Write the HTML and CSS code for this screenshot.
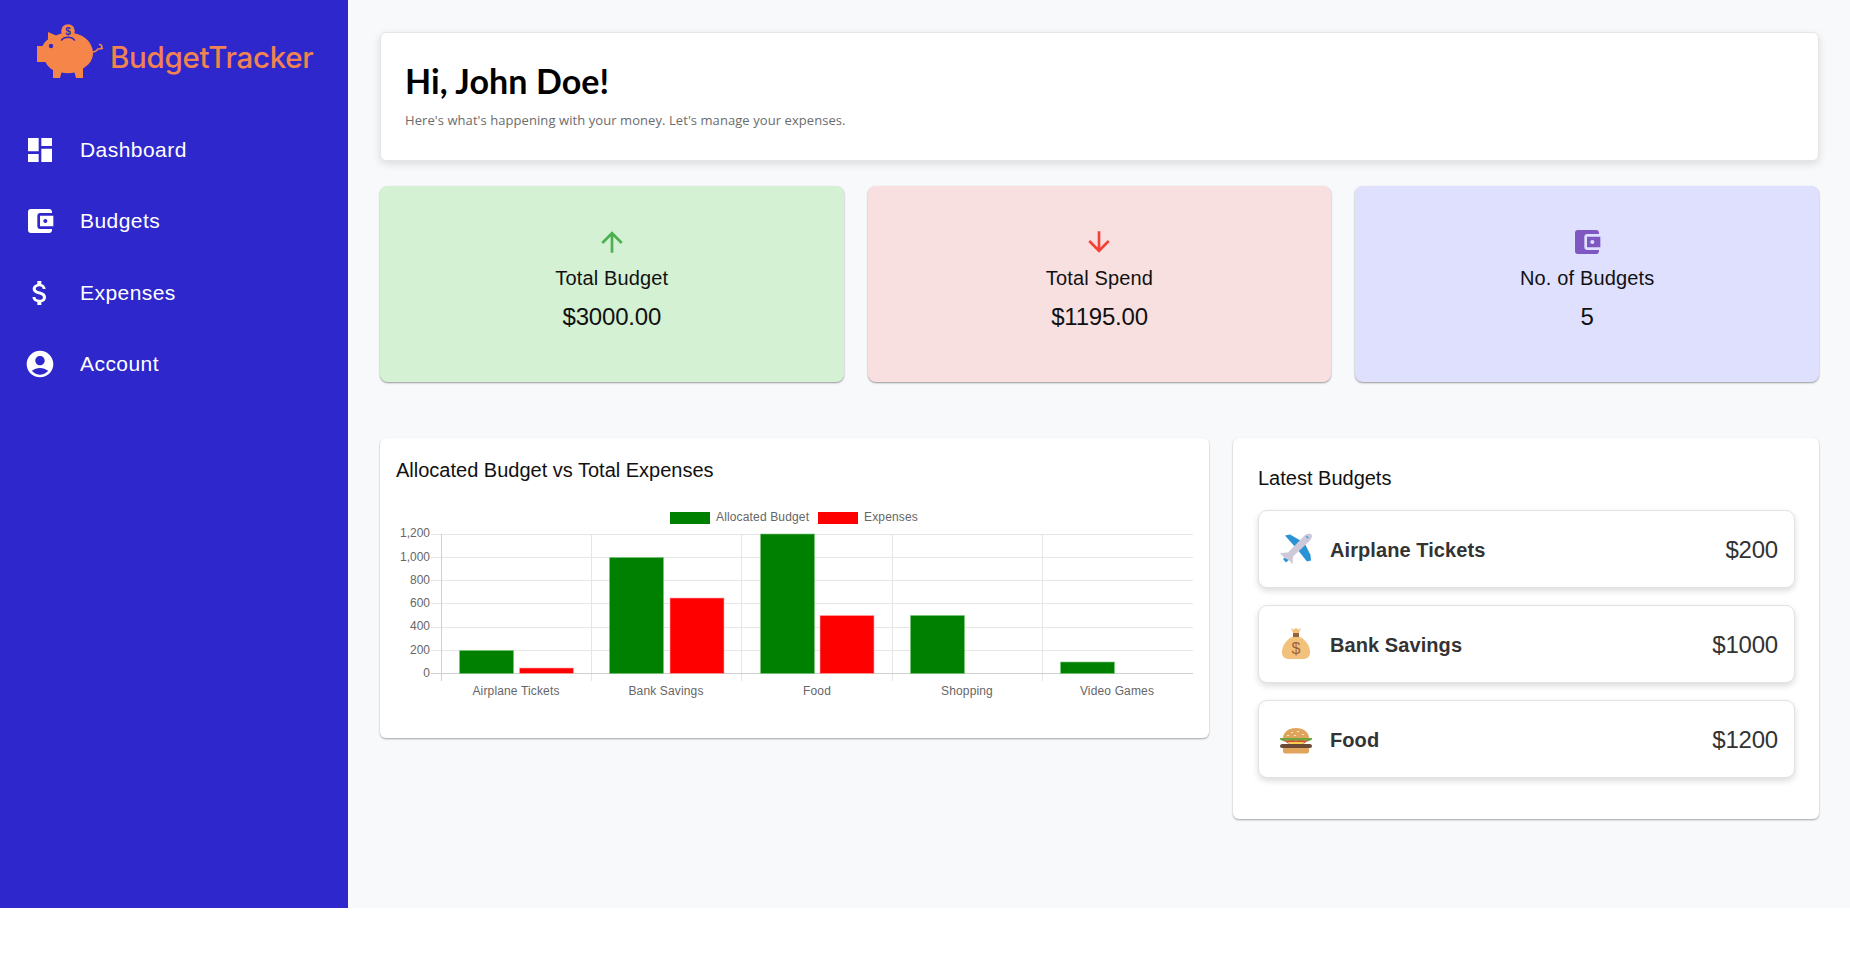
FILE: index.html
```html
<!DOCTYPE html>
<html lang="en">
<head>
<meta charset="utf-8">
<title>BudgetTracker</title>
<link rel="stylesheet" href="styles.css">
</head>
<body>
<div class="shell">
  <aside class="side">
    <div class="brand">
      <svg class="pig" viewBox="37 22 68 58" aria-hidden="true">
        <path class="orange" d="M48 32l8 3.500c3-1.400 6-2.300 9-2.500 2 2.600 5 2.600 7 0 11 1 21 9 21 20 0 7-4 12-10 15.500V78h-7l-1.500-5.500c-4 1-9 1-13 0L60 78h-7v-8c-3.500-2-6-4.500-7.500-8H37V46h5.500c1.300-3 3-4.800 5.500-6.500z"/>
        <circle class="orange" cx="68" cy="31" r="6.800"/>
        <text class="coin" x="68" y="34.500" text-anchor="middle">$</text>
        <path class="slot" d="M61 40.500l3-2.500c3-1.200 5-1.200 8 0l3 2.500"/>
        <circle class="eye" cx="51" cy="46" r="2.200"/>
        <path class="tail" d="M92 52c3 0 5-1 6-3.500M99 44.500a2.300 2.300 0 1 1-1 4c1 .8 3 .5 5-.500"/>
      </svg>
      <span class="brand-name">BudgetTracker</span>
    </div>
    <nav class="nav">
      <a class="nav-item">
        <svg class="icon" viewBox="0 0 24 24"><path d="M3 13h8V3H3v10zm0 8h8v-6H3v6zm10 0h8V11h-8v10zm0-18v6h8V3h-8z"/></svg>
        <span>Dashboard</span>
      </a>
      <a class="nav-item">
        <svg class="icon" viewBox="0 0 24 24"><path d="M21 18v1c0 1.100-.9 2-2 2H5c-1.110 0-2-.9-2-2V5c0-1.100.89-2 2-2h14c1.100 0 2 .9 2 2v1h-9c-1.110 0-2 .9-2 2v8c0 1.100.89 2 2 2h9zm-9-2h10V8H12v8zm4-2.500c-.83 0-1.500-.67-1.500-1.500s.67-1.500 1.500-1.500 1.500.67 1.500 1.500-.67 1.500-1.500 1.500z"/></svg>
        <span>Budgets</span>
      </a>
      <a class="nav-item">
        <svg class="icon" viewBox="0 0 24 24"><path d="M11.800 10.900c-2.270-.59-3-1.200-3-2.150 0-1.090 1.010-1.850 2.700-1.850 1.780 0 2.440.85 2.500 2.100h2.210c-.07-1.720-1.120-3.300-3.210-3.810V3h-3v2.160c-1.940.42-3.500 1.680-3.500 3.610 0 2.310 1.910 3.460 4.700 4.130 2.500.6 3 1.480 3 2.410 0 .69-.49 1.790-2.700 1.790-2.060 0-2.870-.92-2.980-2.100h-2.200c.12 2.190 1.760 3.420 3.680 3.830V21h3v-2.150c1.950-.37 3.500-1.500 3.500-3.550 0-2.840-2.430-3.810-4.700-4.400z"/></svg>
        <span>Expenses</span>
      </a>
      <a class="nav-item">
        <svg class="icon" viewBox="0 0 24 24"><path d="M12 2C6.480 2 2 6.480 2 12s4.480 10 10 10 10-4.480 10-10S17.520 2 12 2zm0 4c1.930 0 3.500 1.570 3.500 3.500S13.930 13 12 13s-3.500-1.570-3.500-3.500S10.070 6 12 6zm0 14c-2.030 0-4.430-.82-6.140-2.880C7.550 15.800 9.680 15 12 15s4.450.8 6.140 2.120C16.430 19.180 14.030 20 12 20z"/></svg>
        <span>Account</span>
      </a>
    </nav>
  </aside>

  <main class="main">
    <section class="card greeting">
      <h1>Hi, John Doe!</h1>
      <p>Here's what's happening with your money. Let's manage your expenses.</p>
    </section>

    <section class="stats">
      <div class="stat stat-green">
        <svg class="icon icon-green" viewBox="0 0 24 24"><path d="M4 12l1.410 1.410L11 7.830V20h2V7.830l5.580 5.590L20 12l-8-8-8 8z"/></svg>
        <div class="stat-label">Total Budget</div>
        <div class="stat-value">$3000.00</div>
      </div>
      <div class="stat stat-red">
        <svg class="icon icon-red" viewBox="0 0 24 24"><path d="M20 12l-1.410-1.410L13 16.170V4h-2v12.170l-5.580-5.590L4 12l8 8 8-8z"/></svg>
        <div class="stat-label">Total Spend</div>
        <div class="stat-value">$1195.00</div>
      </div>
      <div class="stat stat-blue">
        <svg class="icon icon-purple" viewBox="0 0 24 24"><path d="M21 18v1c0 1.100-.9 2-2 2H5c-1.110 0-2-.9-2-2V5c0-1.100.89-2 2-2h14c1.100 0 2 .9 2 2v1h-9c-1.110 0-2 .9-2 2v8c0 1.100.89 2 2 2h9zm-9-2h10V8H12v8zm4-2.500c-.83 0-1.500-.67-1.500-1.500s.67-1.500 1.500-1.500 1.500.67 1.500 1.500-.67 1.500-1.500 1.500z"/></svg>
        <div class="stat-label">No. of Budgets</div>
        <div class="stat-value">5</div>
      </div>
    </section>

    <section class="lower">
      <div class="panel chart-panel">
        <h2 class="panel-title">Allocated Budget vs Total Expenses</h2>
        <svg class="chart" viewBox="380 500 829 220" aria-label="Bar chart">
          <g class="grid">
            <path d="M431 534.500H1193M431 557.500H1193M431 580.500H1193M431 603.500H1193M431 627.500H1193M431 650.500H1193"/>
            <path d="M591.500 534V681M741.500 534V681M892.500 534V681M1042.500 534V681"/>
          </g>
          <path class="axis" d="M431 673.500H1193M441.500 534V681"/>
          <g class="bar-green">
            <rect x="459.500" y="650.500" width="54" height="23"/>
            <rect x="609.500" y="557.500" width="54" height="116"/>
            <rect x="760.500" y="534" width="54" height="139.500"/>
            <rect x="910.500" y="615.500" width="54" height="58"/>
            <rect x="1060.500" y="662" width="54" height="11.500"/>
          </g>
          <g class="bar-red">
            <rect x="519.500" y="668" width="54" height="5.500"/>
            <rect x="670" y="598" width="54" height="75.500"/>
            <rect x="820" y="615.500" width="54" height="58"/>
          </g>
          <rect class="legend-green" x="670" y="512" width="40" height="12"/>
          <text class="tick tick-wide" x="716" y="521">Allocated Budget</text>
          <rect class="legend-red" x="818" y="512" width="40" height="12"/>
          <text class="tick tick-wide" x="864" y="521">Expenses</text>
          <g class="tick tick-y">
            <text x="430" y="537">1,200</text>
            <text x="430" y="561">1,000</text>
            <text x="430" y="584">800</text>
            <text x="430" y="607">600</text>
            <text x="430" y="630">400</text>
            <text x="430" y="654">200</text>
            <text x="430" y="677">0</text>
          </g>
          <g class="tick tick-x tick-wide">
            <text x="516" y="695">Airplane Tickets</text>
            <text x="666" y="695">Bank Savings</text>
            <text x="817" y="695">Food</text>
            <text x="967" y="695">Shopping</text>
            <text x="1117" y="695">Video Games</text>
          </g>
        </svg>
      </div>

      <div class="panel latest-panel">
        <h2 class="panel-title">Latest Budgets</h2>
        <div class="budget-list">
          <div class="budget">
            <svg class="emoji" viewBox="0 0 32 32">
              <path fill="#2a93d5" d="M5 2.500L10 1.500L23 9L16 15z"/>
              <path fill="#2a93d5" d="M17 16L24 9L30.500 22L31 27.500L27 28.500z"/>
              <path fill="#2a93d5" d="M3 26L8 22L11 25L6 29.500z"/>
              <path fill="#cdc9d9" d="M25 2C28 0 31 .5 31.800 2C32.500 4 31 6.500 29 8.500L13 23.500L12.500 31.500L9.500 27.500L4.500 25L0 20L8 19.500z"/>
              <path fill="#5aa9de" d="M27 2.500l2 2-1.500 1.200-2-2z"/>
            </svg>
            <span class="budget-name">Airplane Tickets</span>
            <span class="budget-amount">$200</span>
          </div>
          <div class="budget">
            <svg class="emoji" viewBox="0 0 32 32">
              <path fill="#f2c27c" d="M11 0l2.500 1.500L16 0l2.500 1.500L21 0l-2 5h-6z"/>
              <path fill="#96623d" d="M13 5h6v4h-6z"/>
              <path fill="#f2c27c" d="M12 9h8c6 3 10 9 10 15 0 5-3 7-7 7H9c-4 0-7-2-7-7 0-6 4-12 10-15z"/>
              <text class="emoji-dollar" x="16" y="26" text-anchor="middle">$</text>
            </svg>
            <span class="budget-name">Bank Savings</span>
            <span class="budget-amount">$1000</span>
          </div>
          <div class="budget">
            <svg class="emoji" viewBox="0 0 32 32">
              <path fill="#e0a45c" d="M3 15C3 9 9 5 16 5s13 4 13 10z"/>
              <path fill="#fbe8c4" d="M11 9h2v1h-2zM17 8h2v1h-2zM22 11h2v1h-2zM7 12h2v1H7zM14 12h2v1h-2z"/>
              <path fill="#6ea53c" d="M0 15h32v1.500l-4 2-4-1-4 2-4-2-4 2-4-2-4 1-4-2z"/>
              <path fill="#d9503a" d="M4 17.500h24l-4 3H8z"/>
              <path fill="#f5d04f" d="M8 19h16l-2 3H10z"/>
              <path fill="#6d4a36" d="M2 21h28c1 0 2 1 2 2s-1 2-2 2H2c-1 0-2-1-2-2s1-2 2-2z"/>
              <path fill="#e0a45c" d="M3 25h26v3.500c0 1-1 2-2 2H5c-1 0-2-1-2-2z"/>
            </svg>
            <span class="budget-name">Food</span>
            <span class="budget-amount">$1200</span>
          </div>
        </div>
      </div>
    </section>
  </main>
</div>
</body>
</html>
```

FILE: styles.css
```css
* { box-sizing: border-box; }
html, body { margin: 0; padding: 0; background: #fff; }
body { font-family: "Liberation Sans", Arial, sans-serif; color: #000; }
.shell { display: flex; height: 908px; overflow: hidden; }

.side { width: 348px; flex: none; background: #2e27cb; color: #fff; }
.brand { display: flex; align-items: center; gap: 5px; padding: 22px 0 0 37px; height: 80px; }
.pig { width: 68px; height: 58px; flex: none; }
.orange { fill: #f58549; }
.eye { fill: #2e27cb; }
.slot { fill: none; stroke: #2e27cb; stroke-width: 1.500; }
.tail { fill: none; stroke: #f58549; stroke-width: 1.600; }
.coin { fill: #2e27cb; font-size: 10px; font-weight: 700; font-family: "Liberation Sans", sans-serif; }
.brand-name { color: #f0834f; font-family: Inter, sans-serif; font-weight: 500; font-size: 29.500px; letter-spacing: -0.3px; line-height: 1; margin-top: 13px; }

.nav { margin-top: 34px; display: flex; flex-direction: column; }
.nav-item { display: flex; align-items: center; gap: 24px; height: 71.500px; padding-left: 24px; font-size: 21px; letter-spacing: .45px; }
.icon { width: 32px; height: 32px; flex: none; fill: currentColor; display: block; }

.main { flex: 1; min-width: 0; background: #f8f9fa; padding: 32px 31px 0 32px; }
.card { background: #fff; border-radius: 6px; border: 1px solid #e5e5e5; box-shadow: 0 3px 8px rgba(0,0,0,.12); }
.greeting { height: 129px; padding: 28px 24px 0; margin-bottom: 25px; }
.greeting h1 { margin: 0; font-family: Lato, sans-serif; font-weight: 700; font-size: 34px; letter-spacing: .1px; line-height: 40px; }
.greeting p { margin: 10px 0 0; font-family: "Open Sans", sans-serif; font-size: 13px; letter-spacing: .07px; line-height: 18px; color: #6c6c6c; }

.stats { display: grid; grid-template-columns: repeat(3, 1fr); gap: 24px; margin-bottom: 56px; }
.stat { height: 196px; border-radius: 8px; display: flex; flex-direction: column; align-items: center; padding-top: 40px; box-shadow: 0 1px 2px rgba(0,0,0,.4); }
.stat-green { background: #d4f1d4; }
.stat-red { background: #f9e0e0; }
.stat-blue { background: #dfdffe; }
.icon-green { color: #4caf50; }
.icon-red { color: #f44336; }
.icon-purple { color: #7e57c2; }
.stat-label { font-size: 20px; line-height: 28px; margin-top: 6px; letter-spacing: .15px; color: #111; }
.stat-value { font-size: 24px; line-height: 32px; margin-top: 9px; letter-spacing: -.2px; color: #111; }

.lower { display: grid; grid-template-columns: 829px 1fr; gap: 24px; align-items: start; }
.panel { background: #fff; border-radius: 6px; box-shadow: 0 1px 2px rgba(0,0,0,.35); }
.panel-title { margin: 0; font-size: 20px; font-weight: 400; line-height: 32px; color: #111; }
.chart-panel { height: 300px; padding-top: 16px; }
.chart-panel .panel-title { padding-left: 16px; }
.chart { display: block; width: 829px; height: 220px; margin-top: 14px; }
.grid path { fill: none; stroke: #e6e6e6; stroke-width: 1; }
.axis { fill: none; stroke: #d0d0d0; stroke-width: 1; }
.bar-green rect { fill: #008000; stroke: rgba(120,200,120,.6); stroke-width: 1; }
.bar-red rect { fill: #f00; stroke: rgba(255,170,170,.6); stroke-width: 1; }
.legend-green { fill: #008000; }
.legend-red { fill: #f00; }
.tick { font-family: "Liberation Sans", Arial, sans-serif; font-size: 12px; fill: #666; }
.tick-wide { letter-spacing: .15px; }
.tick-y { text-anchor: end; }
.tick-x { text-anchor: middle; }

.latest-panel { height: 381px; padding: 24px 24px 0 25px; }
.budget-list { display: flex; flex-direction: column; gap: 17px; margin-top: 16px; }
.budget { height: 78px; display: flex; align-items: center; padding: 0 16px 0 21px; background: #fff; border: 1px solid #e2e2e2; border-radius: 9px; box-shadow: 0 3px 6px rgba(0,0,0,.14); }
.emoji { width: 32px; height: 32px; flex: none; margin-right: 18px; }
.emoji-dollar { fill: #a1613c; font-size: 16px; font-family: "Liberation Sans", sans-serif; }
.budget-name { flex: 1; font-size: 20px; font-weight: 700; color: #333; letter-spacing: .08px; padding-top: 2px; }
.budget-amount { font-size: 24px; color: #333; letter-spacing: -.2px; padding-top: 1px; }
```
